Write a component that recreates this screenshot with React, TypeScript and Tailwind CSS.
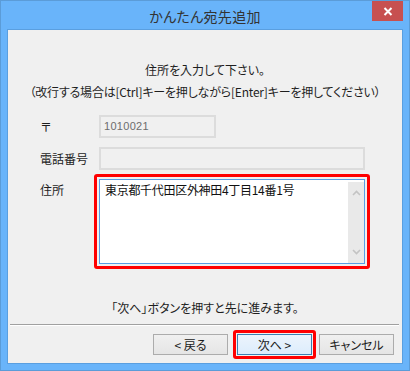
import React from "react";

const jp = "font-['Noto_Sans_CJK_JP',sans-serif]";
const palt = "[font-feature-settings:'palt']";

function Chevron({ up }: { up?: boolean }) {
  return (
    <svg width="9" height="6" viewBox="0 0 9 6" className="block">
      <path
        d={up ? "M1 5 L4.5 1.5 L8 5" : "M1 1 L4.5 4.5 L8 1"}
        fill="none"
        stroke="#c3c3c3"
        strokeWidth="1.6"
      />
    </svg>
  );
}

function Btn({ label, primary }: { label: string; primary?: boolean }) {
  return (
    <div
      className={
        "w-[75px] h-[21px] flex items-center justify-center text-[12px] leading-none text-[#1b1b1b] border " +
        (primary
          ? "border-[#3c7fb1] bg-gradient-to-b from-[#ecf4fc] to-[#dcecfc]"
          : "border-[#acacac] bg-gradient-to-b from-[#f0f0f0] to-[#e5e5e5]")
      }
    >
      <span className={palt}>{label}</span>
    </div>
  );
}

export default function App() {
  return (
    <div
      className={`relative w-[410px] h-[371px] bg-[#69b4fa] border border-[#5b9cd8] flex flex-col px-[6px] pb-[6px] ${jp}`}
    >
      {/* title bar */}
      <div className="h-[28px] flex items-center justify-center">
        <span className={`text-[14px] text-[#333333] leading-none mt-[2px] tracking-[0.3px] ${palt}`}>かんたん宛先追加</span>
      </div>
      <div className="absolute top-0 right-[6px] w-[31px] h-[20px] bg-[#c75050] flex items-center justify-center">
        <svg width="10" height="9" viewBox="0 0 10 9">
          <path d="M1.5 1 L8.5 8 M8.5 1 L1.5 8" stroke="#ffffff" strokeWidth="2" />
        </svg>
      </div>

      {/* client area */}
      <div className="flex-1 border border-[#5a9fe0] bg-[#f0f0f0] flex flex-col text-[12px] text-[#1e1e1e]">
        <p className={`pt-[32px] leading-[16px] text-center ${palt}`}>住所を入力して下さい。</p>
        <p className={`mt-[6px] leading-[16px] text-center tracking-[-0.2px] ${palt}`}>
          （改行する場合は[Ctrl]キーを押しながら[Enter]キーを押してください）
        </p>

        <div className="mt-[15px] pl-[32px] grid grid-cols-[59px_1fr]">
          <div className="flex items-center h-[23px] leading-[16px]">〒</div>
          <div className="w-[117px] h-[23px] border-2 border-[#dcdcdc] bg-[#f0f0f0] flex items-center pl-[3px]">
            <span className="font-['Liberation_Sans',sans-serif] text-[11px] text-[#6d6d6d] tracking-[0.3px]">1010021</span>
          </div>

          <div className="mt-[9px] flex items-center h-[23px] leading-[16px]">電話番号</div>
          <div className="mt-[9px] w-[266px] h-[23px] border-2 border-[#dcdcdc] bg-[#f0f0f0]" />

          <div className="mt-[4px] pt-[8px] leading-[16px]">住所</div>
          <div className="mt-[4px] -ml-[5px] w-[276px] border-[3px] border-[#ff0000] rounded-[3px] p-[2px]">
            <div className="h-[85px] border border-[#569de5] bg-white flex">
              <div className="flex-1 pl-[5px] pt-[2px] leading-[16px] text-[12px] text-[#111] tracking-[-0.3px]">
                東京都千代田区外神田4丁目14番1号
              </div>
              <div className="w-[16px] mt-[2px] bg-[#e9e9e9] flex flex-col items-center justify-between py-[8px]">
                <Chevron up />
                <Chevron />
              </div>
            </div>
          </div>
        </div>

        <p className={`mt-[31px] leading-[16px] text-center ${palt}`}>「次へ」ボタンを押すと先に進みます。</p>

        <div className="mt-[8px] ml-[2px] mr-[3px] h-[2px] border-t border-[#a0a0a0] border-b border-b-white" />

        <div className="mt-[4px] flex justify-end items-center pr-[8px]">
          <Btn label="< 戻る" />
          <div className="ml-[5px] border-[3px] border-[#ff0000] rounded-[3px] p-[1px]">
            <Btn label="次へ >" primary />
          </div>
          <div className="ml-[3px]">
            <Btn label="キャンセル" />
          </div>
        </div>
      </div>
    </div>
  );
}
